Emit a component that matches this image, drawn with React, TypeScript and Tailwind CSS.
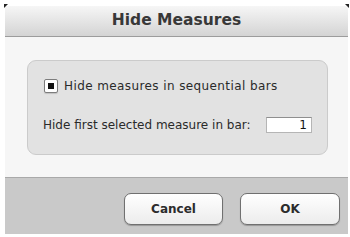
export default function App() {
  return (
    <div
      className="w-[350px] h-[237px] bg-white overflow-hidden pt-[6px] pl-[5px] pr-[2px] pb-[3px]"
      style={{ fontFamily: '"DejaVu Sans", "Liberation Sans", sans-serif' }}
    >
      <div className="relative flex flex-col h-full">
        {/* window corners */}
        <span className="absolute -left-[1px] -top-[2px] w-0 h-0 border-t-[4px] border-t-[#222] border-r-[4px] border-r-transparent" />
        <span className="absolute -right-[1px] -top-[2px] w-0 h-0 border-t-[4px] border-t-[#222] border-l-[4px] border-l-transparent" />

        {/* title bar */}
        <div className="h-[31px] flex items-center justify-center bg-gradient-to-b from-[#f6f6f6] to-[#d4d4d4] border-b border-[#9c9c9c]">
          <span className="text-[15.5px] font-bold text-[#383838] leading-none">Hide Measures</span>
        </div>

        {/* body */}
        <div className="h-[140px] bg-[#f6f6f6] pt-[23px] pl-[22px] pr-[20px]">
          <div className="h-[95px] rounded-[9px] bg-[#e2e2e2] border border-[#cbcbcb] pl-[15px] pr-[15px] pt-[18px]">
            <div className="flex items-center h-[13px]">
              <div className="ml-[1px] w-[14px] h-[14px] rounded-[2px] border border-[#7d7d7d] bg-white flex items-center justify-center shadow-[0_1px_1px_rgba(0,0,0,0.15)]">
                <div className="w-[6px] h-[6px] bg-[#111]" />
              </div>
              <span className="ml-[6px] text-[12px] tracking-[0.4px] text-[#2a2a2a] leading-none">Hide measures in sequential bars</span>
            </div>
            <div className="flex items-center mt-[25px] h-[15px]">
              <span className="text-[12px] text-[#2a2a2a] leading-none">Hide first selected measure in bar:</span>
              <div className="ml-auto w-[46px] h-[16px] bg-white border border-[#b5b5b5] border-t-[#8f8f8f] flex items-center justify-end pr-[4px]">
                <span className="text-[12px] text-[#111] leading-none">1</span>
              </div>
            </div>
          </div>
        </div>

        {/* button band */}
        <div className="h-[57px] bg-[#c9c9c9] border-t border-[#a9a9a9] flex items-start justify-end pt-[15px] pr-[8px] gap-[17px]">
          <button className="w-[99px] h-[32px] rounded-[7px] border-[1.5px] border-[#707070] bg-gradient-to-b from-[#ffffff] to-[#ececec] shadow-[0_1px_1px_rgba(0,0,0,0.25)] text-[12px] font-bold text-[#2c2c2c]">
            Cancel
          </button>
          <button className="w-[100px] h-[32px] rounded-[7px] border-[1.5px] border-[#707070] bg-gradient-to-b from-[#ffffff] to-[#ececec] shadow-[0_1px_1px_rgba(0,0,0,0.25)] text-[12px] font-bold text-[#2c2c2c]">
            OK
          </button>
        </div>
      </div>
    </div>
  );
}
